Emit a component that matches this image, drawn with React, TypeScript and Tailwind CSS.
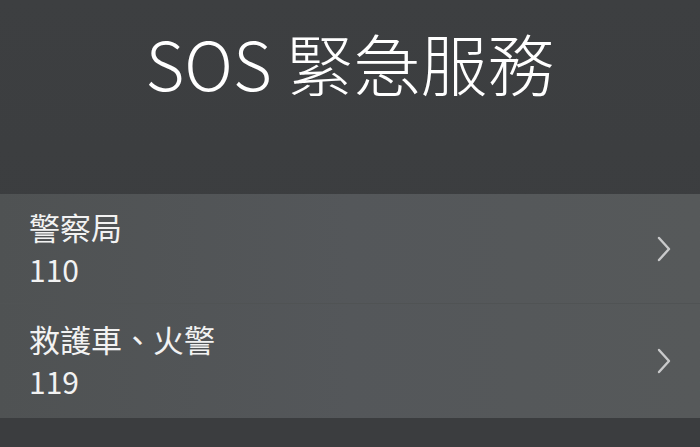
const font = { fontFamily: '"Noto Sans CJK TC", "Noto Sans", sans-serif' };

function Chevron() {
  return (
    <svg width="16" height="26" viewBox="0 0 16 26" fill="none" className="shrink-0">
      <path d="M3 2 L13 13 L3 24" stroke="#c9cacb" strokeWidth="2.4" strokeLinecap="round" strokeLinejoin="round" />
    </svg>
  );
}

const services = [
  { name: "警察局", number: "110" },
  { name: "救護車、火警", number: "119" },
];

export default function App() {
  return (
    <div
      className="w-[700px] h-[447px] overflow-hidden flex flex-col bg-gradient-to-b from-[#3d3f41] to-[#3a3c3e] text-white"
      style={font}
    >
      <header className="h-[194px] flex justify-center pt-[22px]">
        <h1 className="text-[67px] font-extralight leading-[80px]">SOS 緊急服務</h1>
      </header>

      <ul className="bg-gradient-to-r from-[#4f5253] via-[#54575a] to-[#56595a]">
        {services.map((s, i) => (
          <li
            key={s.number}
            className={
              "flex items-center pl-[29px] pr-[28px] " +
              (i === 0 ? "h-[110px] border-b border-[#505354]" : "h-[114px]")
            }
          >
            <div className="flex-1 flex flex-col">
              <span className="text-[31px] leading-[41px] text-[#f2f2f2]">{s.name}</span>
              <span className="text-[30px] leading-[45px] text-[#f2f2f2]">{s.number}</span>
            </div>
            <Chevron />
          </li>
        ))}
      </ul>

      <div className="flex-1 bg-[#3b3d3f]" />
    </div>
  );
}
